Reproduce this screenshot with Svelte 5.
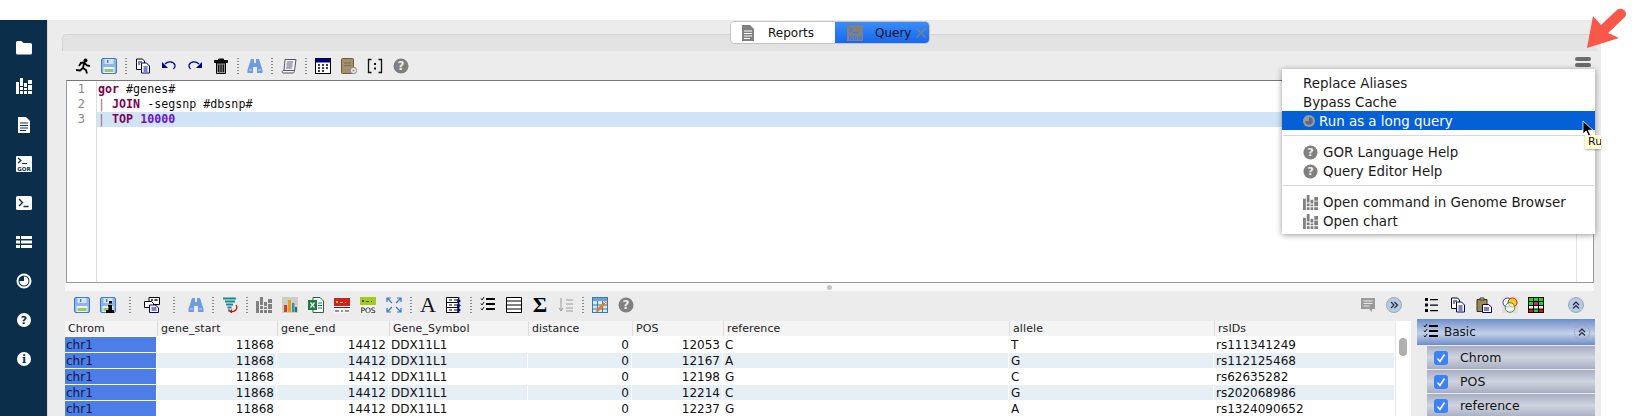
<script>
  // svg bodies, all drawn on a 16x16 box
  const help = '<circle cx="8" cy="8" r="7.500" fill="#808080"/><text x="8" y="12" text-anchor="middle" font-size="12" font-weight="700" font-family="DejaVu Sans" fill="#ececec">?</text>';
  const save = '<rect x=".5" y=".5" width="15" height="15" rx="1.500" fill="#8fb4e6" stroke="#3f78c8"/><rect x="3.500" y="1" width="9" height="5" fill="#d5e3f6"/><rect x="6" y="2" width="1.400" height="3" fill="#3f78c8"/><rect x="2.500" y="9" width="11" height="6" fill="#eef3f8"/><rect x="3.500" y="11" width="9" height="3" fill="#98c860"/>';
  const bars = '<path d="M0 4h3v12H0zM4 0h3v8H4zM4 9h3v3H4zM4 13h3v3H4zM8 5h3v4H8zM8 10h3v2H8zM8 13h3v3H8zM12 2h4v4h-4zM12 7h4v5h-4zM12 13h4v3h-4z"/>';
  const copy = '<path d="M1.500 1h6l2 2v8.500h-8z" fill="#fff" stroke="#000"/><path d="M6.500 5h5l3 3v7h-8z" fill="#fff" stroke="#00007a"/><path d="M3 4h4M3 6h2M8.500 9h4M8.500 11h4M8.500 13h4" stroke="#00007a" fill="none"/>';
  const binoc = '<path d="M4 1h3v4h2V1h3l3.500 11v3H10V9H6v6H.5v-3z" fill="#6f9be0"/><path d="M2 12h3M11 12h3" stroke="#c8daf4"/>';
  const chevR = '<circle cx="8" cy="8" r="7.500" fill="#b4cbe6" stroke="#a0a8b4"/><path d="M5 5l3 3-3 3M8.500 5l3 3-3 3" fill="none" stroke="#223" stroke-width="1.100"/>';
  const chevU = '<circle cx="8" cy="8" r="7.500" fill="#b4cbe6" stroke="#a0a8b4"/><path d="M5 8l3-3 3 3M5 11.500l3-3 3 3" fill="none" stroke="#223" stroke-width="1.100"/>';
  const checks = '<path d="M1 1.500l1 1.500 2-3M1 6.500l1 1.500 2-3M1 11.500l1 1.500 2-3" fill="none" stroke="#000" stroke-width=".9"/><path d="M6 2h9M6 7h9M6 12h9" stroke="#000" stroke-width="1.800"/>';

  const icons = {
    folder: '<path d="M0 3.500q0-1.500 1.500-1.500h4l2 2h7q1.500 0 1.500 1.500v8.500q0 1.500-1.500 1.500h-13q-1.500 0-1.500-1.500z" fill="#fff"/>',
    sidedoc: '<path d="M2 0h8l4 4v12H2z" fill="#fff"/><path d="M4 6h8M4 8.500h8M4 11h8M4 13.500h6" stroke="#0b2e4b" stroke-width="1.200"/>',
    gor: '<rect width="16" height="16" rx="1" fill="#fff"/><path d="M2 2l3 2.500-3 2.500M6 7.500h5" fill="none" stroke="#0b2e4b" stroke-width="1.200"/><text x="8" y="14.500" text-anchor="middle" font-size="5.500" font-weight="700" font-family="DejaVu Sans" fill="#0b2e4b">GOR</text>',
    term: '<rect y="1" width="16" height="14" rx="1.500" fill="#fff"/><path d="M3 4l3.500 3.500L3 11M7.500 11.500h5" fill="none" stroke="#0b2e4b" stroke-width="1.400"/>',
    list: '<path d="M0 2h4v3H0zM5 2h11v3H5zM0 6.500h4v3H0zM5 6.500h11v3H5zM0 11h4v3H0zM5 11h11v3H5z" fill="#fff"/>',
    clock: '<circle cx="8" cy="8" r="6.500" fill="none" stroke="#fff" stroke-width="2"/><path d="M8 3.500a4.500 4.500 0 1 1-4.500 4.500H8z" fill="#fff"/>',
    sidehelp: '<circle cx="8" cy="8" r="7" fill="#fff"/><text x="8" y="12" text-anchor="middle" font-size="11" font-weight="700" font-family="DejaVu Sans" fill="#0b2e4b">?</text>',
    info: '<circle cx="8" cy="8" r="7" fill="#fff"/><text x="8" y="12" text-anchor="middle" font-size="11" font-weight="700" font-family="DejaVu Serif" fill="#0b2e4b">i</text>',
    bars,
    sidebars: bars.replace('<path', '<path fill="#fff"'),
    graybars: bars.replace('<path', '<path fill="#808080"'),
    run: '<circle cx="10.500" cy="2.500" r="2"/><path d="M5 5l4-.500 3 3 3 .500M9 5L8 10l-3 2.500L1 12M8 10l3 2 1 3.500M6 5L4 8" fill="none" stroke="#000" stroke-width="1.800"/>',
    save,
    copy,
    undo: '<path d="M4 6c3-3 8-3 10 1 .500 2-.500 3-1.500 4" fill="none" stroke="#00008c" stroke-width="1.300"/><path d="M1 4v6h6z" fill="#00008c"/>',
    redo: '<path d="M12 6C9 3 4 3 2 7c-.500 2 .500 3 1.500 4" fill="none" stroke="#00008c" stroke-width="1.300"/><path d="M15 4v6H9z" fill="#00008c"/>',
    trash: '<path d="M1.500 2.500h13v2h-13zM5.500 2.500v-1.500h5v1.500" fill="#111" stroke="#000"/><path d="M3.500 5h9v10.500h-9z" fill="#999" stroke="#000"/><path d="M5.700 6.500v7.500M8 6.500v7.500M10.300 6.500v7.500" stroke="#000" stroke-width="1.200"/>',
    binoc,
    script: '<path d="M4 1.500h11l-1.500 11H3zM3 12.500c-2 0-2.500 2-1 2.500h10c1 0 1.500-1.500 1.500-2.500" fill="#f4f4f4" stroke="#556"/><path d="M6 4h6M5.500 6h6M5.500 8h6M5 10h6" stroke="#667"/>',
    calendar: '<rect x=".5" y=".5" width="15" height="15" fill="#fff" stroke="#000"/><rect x="1" y="1" width="14" height="3.500" fill="#00008c"/><path d="M3 7h2M7 7h2M11 7h2M3 10h2M7 10h2M11 10h2M3 13h2M7 13h2" stroke="#000" stroke-width="1.300"/>',
    book: '<rect x=".5" y=".5" width="12" height="15" rx="1" fill="#a48f6d" stroke="#6e5c40"/><path d="M3 5h7M3 7.500h7" stroke="#7d6b4c"/><circle cx="12.500" cy="12.500" r="3.200" fill="#e8e8e8" stroke="#888"/><circle cx="12.500" cy="12.500" r="1" fill="#888"/>',
    brackets: '<path d="M4.500 1.500h-3v13h3M11.500 1.500h3v13h-3" fill="none" stroke="#111" stroke-width="1.300"/><path d="M7 5h2v2H7zM7 9.500h2v2H7z" fill="#111"/>',
    help,
    saveinfo: save + '<rect x="9" y="4" width="3" height="2.500" fill="#000"/><path d="M8 8h4v5h2v3H6v-3h2.500V9.500H8z" fill="#000"/>',
    tablecopy: '<path d="M5 .5h10.500v7H5z" fill="#fff" stroke="#000"/><path d="M7 3h2M10.500 3h3" stroke="#000" stroke-width="1.500"/><path d="M.5 4.500h7l2 2v4H.5z" fill="#fff" stroke="#000"/><path d="M5.500 8h6l3 3v4.500h-9z" fill="#fff" stroke="#00007a"/><path d="M7.500 11h5M7.500 13h5" stroke="#00007a"/>',
    filter: '<path d="M1 1.500h13M3 4.500h10M4 7.500h7M5.500 10.500h4M6 13.500h2" stroke="#1c8a8a" stroke-width="1.800"/><path d="M14 8c2 3 0 7-5 6.500" fill="none" stroke="#d01010" stroke-width="1.300"/><path d="M7 14.500l3-2.500v4.500z" fill="#d01010"/>',
    graybar: '<rect width="16" height="16" fill="#d0ccc8"/><path d="M2 8h3v7H2z" fill="#d04020"/><path d="M6 3h3v12H6z" fill="#e0a020"/><path d="M10 6h2.500v9H10z" fill="#3090c8"/><path d="M13 10h2v5h-2z" fill="#208040"/>',
    excel: '<path d="M5 .5h7l3.500 3.500v11.500H5z" fill="#fff" stroke="#1d6b3c"/><rect y="3" width="9" height="10" fill="#1d7a44"/><path d="M2.500 5.500l4 5M6.500 5.500l-4 5" stroke="#fff" stroke-width="1.300"/><path d="M10 6h4M10 8.500h4M10 11h4" stroke="#1d7a44"/>',
    redtrack: '<rect width="16" height="16" fill="#f4f4f4"/><rect y="1" width="16" height="8" fill="#d02020"/><path d="M2 6V4h2v2zM6 6V5h3v1zM11 6V5h1v1z" fill="#a0e040"/><path d="M0 10.500h16M1 14h4M7 14h2M11 14h4" stroke="#333"/>',
    pos: '<rect width="16" height="16" fill="#f4f4f4"/><rect y="0" width="16" height="8" fill="#a8c820"/><path d="M2 5V3h2v2zM6 5V4h3v1zM11 5V4h1v1z" fill="#2a6010"/><text x="8" y="15.500" text-anchor="middle" font-size="7.500" font-family="DejaVu Sans" fill="#000">POS</text>',
    expand: '<path d="M6 6L1.500 1.500M1 5V1h4M10 6l4.500-4.500M11 1h4v4M6 10l-4.500 4.500M1 11v4h4M10 10l4.500 4.500M15 11v4h-4" fill="none" stroke="#3c78d0" stroke-width="1.200"/>',
    cols: '<path d="M.5.5h12v15H.5z" fill="#fff" stroke="#000"/><path d="M.5 5.500h12M.5 10.500h12" stroke="#000"/><path d="M3 3h3M8 3h3M3 8h3M8 8h3M3 13h3M8 13h3" stroke="#000"/><path d="M13 0v16M11.500 2.500l3 1.500-3 1.500zM11.500 7l3 1.500-3 1.500zM11.500 11.500l3 1.500-3 1.500z" fill="#00008c" stroke="#00008c" stroke-width=".8"/>',
    checks,
    lines: '<path d="M.5.5h15v15H.5z" fill="#fff" stroke="#000"/><path d="M0 4h16M0 8h16M0 12h16" stroke="#000" stroke-width="1.200"/>',
    sort: '<path d="M3 1v13M1 11l2 3 2-3M8 3h7M8 7h7M8 11h7M8 14h7" fill="none" stroke="#9a9a9a"/>',
    tableedit: '<rect x=".5" y=".5" width="15" height="15" fill="#d8e8f6" stroke="#3c78b0"/><rect x="1" y="1" width="14" height="3" fill="#6fa0d0"/><path d="M1 8h14M1 12h14M5.500 4v11M10.500 4v11" stroke="#3c78b0"/><path d="M5 12l8-8 2 2-8 8-3 1z" fill="#e88020"/><path d="M12 5l2 2" stroke="#fff"/>',
    comment: '<path d="M1 1h14v11h-3v3l-3-3H1z" fill="#9a9a9a"/><path d="M3.500 4h9M3.500 6.500h9M3.500 9h6" stroke="#ececec"/>',
    chevR,
    chevU,
    plainlist: '<path d="M1 1h3v3H1zM1 6.500h3v3H1zM1 12h3v3H1zM6 2h8v1.300H6zM6 7.500h8v1.300H6zM6 13h8v1.300H6z"/>',
    clip: '<path d="M1 2.500h10v12H1z" fill="#9a8a50" stroke="#332"/><path d="M4 3V1h4v2z" fill="#ddd" stroke="#332"/><path d="M6.500 7.500h6l3 2.500v5.500h-9z" fill="#fff" stroke="#00007a"/><path d="M8 11h5M8 13h5" stroke="#00007a"/>',
    venn: '<rect width="16" height="16" fill="#f4d8dc"/><circle cx="5.500" cy="5.500" r="4.500" fill="#fff" stroke="#2040d0"/><circle cx="10.500" cy="5.500" r="4.500" fill="#f0d020" stroke="#d02020"/><circle cx="8" cy="10.500" r="4.800" fill="#fff" fill-opacity=".6" stroke="#20a040"/>',
    grid: '<rect width="16" height="16" fill="#000"/><path d="M1 1h4v3H1zM6 1h4v3H6zM11 1h4v3h-4zM1 5h4v3H1zM11 5h4v3h-4z" fill="#10e010"/><path d="M6 5h4v3H6z" fill="#e010d0"/><path d="M1 9h4v2.500H1zM6 9h4v2.500H6zM11 9h4v2.500h-4z" fill="#fff"/><path d="M1 12.500h4V15H1zM11 12.500h4V15h-4z" fill="#e01010"/><path d="M6 12.500h4V15H6z" fill="#10e010"/>'
  };

  const sideIcons = ['folder', 'sidebars', 'sidedoc', 'gor', 'term', 'list', 'clock', 'sidehelp', 'info'];

  const editorTools = ['run', 'save', '|', 'copy', 'undo', 'redo', 'trash', '|', 'binoc', '|', 'script', '|', 'calendar', 'book', 'brackets', 'help'];
  const tableTools = ['save', 'saveinfo', '||', 'tablecopy', '||', 'binoc', '|', 'filter', '|', 'graybars', 'graybar', 'excel', 'redtrack', 'pos', 'expand', '|', 'A', 'cols', '|', 'checks', 'lines', 'Σ', 'sort', '|', 'tableedit', 'help'];
  const sideTools = ['plainlist', 'copy', 'clip', 'venn', 'grid'];

  const columns = ['Chrom', 'gene_start', 'gene_end', 'Gene_Symbol', 'distance', 'POS', 'reference', 'allele', 'rsIDs'];
  const rows = [
    [12053, 'C', 'T', 'rs111341249'],
    [12167, 'A', 'G', 'rs112125468'],
    [12198, 'G', 'C', 'rs62635282'],
    [12214, 'C', 'G', 'rs202068986'],
    [12237, 'G', 'A', 'rs1324090652']
  ];
  const fields = ['Chrom', 'POS', 'reference'];
</script>

{#snippet icon(name, size = 16)}
  <svg class="icon" width={size} height={size} viewBox="0 0 16 16">{@html icons[name]}</svg>
{/snippet}

{#snippet tools(list)}
  {#each list as t}
    {#if t === '|'}
      <span class="sep"></span>
    {:else if t === '||'}
      <span class="sep wide"></span>
    {:else if t === 'A' || t === 'Σ'}
      <span class="tool glyph" class:sum={t === 'Σ'}>{t}</span>
    {:else}
      <span class="tool">{@render icon(t)}</span>
    {/if}
  {/each}
{/snippet}

<div class="app">
  <nav class="sidebar">
    {#each sideIcons as s}
      <span class="side-item">{@render icon(s)}</span>
    {/each}
  </nav>

  <main class="main">
    <section class="panel">
      <div class="strip">
        <div class="tabs">
          <div class="tab">
            <svg class="tab-icon" width="12" height="16" viewBox="0 0 12 16"><path d="M0 0h8l4 4v12H0z" fill="#808080"/><path d="M2 6h8M2 8.500h8M2 11h8M2 13.500h6" stroke="#fff"/></svg>
            Reports
          </div>
          <div class="tab active">
            <svg class="tab-icon" width="16" height="16" viewBox="0 0 16 16"><rect width="16" height="16" fill="#808080"/><path d="M2 2l3 2.500L2 7M6 7.500h5" fill="none" stroke="#2f7ef5"/><text x="8" y="14.500" text-anchor="middle" font-size="5.500" font-weight="700" font-family="DejaVu Sans" fill="#2f7ef5">GOR</text></svg>
            Query
            <svg class="tab-close" width="10" height="10" viewBox="0 0 10 10"><path d="M.5.5l9 9M9.500.5l-9 9" stroke="#808080" stroke-width="1.300"/></svg>
          </div>
        </div>
      </div>

      <div class="toolbar top">
        {@render tools(editorTools)}
        <span class="burger"></span>
      </div>

      <div class="editor">
        <div class="gutter">
          <div>1</div>
          <div>2</div>
          <div>3</div>
        </div>
        <div class="code">
          <div class="line"><b>gor</b> #genes#</div>
          <div class="line"><i>|</i> <b>JOIN</b> -segsnp #dbsnp#</div>
          <div class="line current"><i>|</i> <b>TOP</b> <em>10000</em></div>
        </div>
        <div class="track"></div>
      </div>

      <div class="sash"><span></span></div>

      <div class="lower">
        <div class="results">
          <div class="toolbar table-tools">
            {@render tools(tableTools)}
            <span class="spacer"></span>
            <span class="tool">{@render icon('comment')}</span>
            <span class="tool last">{@render icon('chevR')}</span>
          </div>
          <div class="table-wrap">
            <div class="table">
              <div class="row head">
                {#each columns as c}
                  <div class="cell">{c}</div>
                {/each}
              </div>
              {#each rows as r}
                <div class="row">
                  <div class="cell chrom">chr1</div>
                  <div class="cell num">11868</div>
                  <div class="cell num">14412</div>
                  <div class="cell">DDX11L1</div>
                  <div class="cell num">0</div>
                  <div class="cell num">{r[0]}</div>
                  <div class="cell">{r[1]}</div>
                  <div class="cell">{r[2]}</div>
                  <div class="cell">{r[3]}</div>
                </div>
              {/each}
            </div>
            <div class="scroll"><span></span></div>
          </div>
        </div>

        <aside class="fields">
          <div class="toolbar side">
            {@render tools(sideTools)}
            <span class="spacer"></span>
            <span class="tool">{@render icon('chevU')}</span>
          </div>
          <div class="group">
            {@render icon('checks')}
            <span>Basic</span>
            <svg class="group-toggle" width="16" height="16" viewBox="0 0 16 16"><circle cx="8" cy="8" r="7.500" fill="none" stroke="#9aa0ac" stroke-dasharray="1.500 1"/><path d="M5 8l3-3 3 3M5 11.500l3-3 3 3" fill="none" stroke="#223" stroke-width="1.100"/></svg>
          </div>
          {#each fields as f}
            <div class="field">
              <span class="check"><svg width="14" height="14" viewBox="0 0 14 14"><path d="M3.500 7.500l2.500 3 4.500-7" fill="none" stroke="#fff" stroke-width="1.600"/></svg></span>
              {f}
            </div>
          {/each}
        </aside>
      </div>
    </section>
  </main>

  <!-- popup menu, cursor and the annotation arrow lie over the page -->
  <div class="menu">
    <div class="item">Replace Aliases</div>
    <div class="item">Bypass Cache</div>
    <div class="item selected">
      <svg width="12" height="12" viewBox="0 0 16 16"><circle cx="8" cy="8" r="8" fill="#9a9a9a"/><path d="M8 3a5 5 0 1 1-5 5h5z" fill="#5a6a88"/></svg>
      Run as a long query
    </div>
    <hr />
    <div class="item iconed">{@render icon('help', 15)} GOR Language Help</div>
    <div class="item iconed">{@render icon('help', 15)} Query Editor Help</div>
    <hr />
    <div class="item iconed">{@render icon('graybars', 15)} Open command in Genome Browser</div>
    <div class="item iconed">{@render icon('graybars', 15)} Open chart</div>
  </div>

  <div class="tooltip">Ru</div>

  <svg class="cursor" width="13" height="18" viewBox="0 0 13 18"><path d="M1 1v13l3.200-3 2.300 5 2-1-2.200-4.800H11z" fill="#000" stroke="#fff" stroke-width=".8"/></svg>

  <svg class="arrow" width="48" height="52" viewBox="0 0 48 52"><path d="M3 48L9 16l8 9 16-15c4-3 9 0 9 4 0 2-1 3-2 4L24 33l11 5z" fill="#f8574a"/></svg>
</div>

<style>
  :global(body) {
    margin: 0;
    background: #fff;
  }

  .app {
    position: relative;
    display: flex;
    width: 1632px;
    height: 416px;
    padding-top: 20px;
    box-sizing: border-box;
    overflow: hidden;
    font-family: "DejaVu Sans", sans-serif;
    color: #111;
  }

  .icon {
    display: block;
    flex: none;
  }

  .sidebar {
    width: 47px;
    flex: none;
    background: #0b2e4b;
    padding-top: 7px;
    box-sizing: border-box;
  }

  .side-item {
    display: flex;
    height: 39.1px;
    align-items: center;
    justify-content: center;
  }

  .main {
    width: 1554px;
    flex: none;
    box-sizing: border-box;
    background: #ececec;
    border-left: 1px solid #d6d6d6;
    padding: 14px 4px 0 14px;
  }

  .panel {
    height: 382px;
  }

  .strip {
    height: 16px;
    display: flex;
    justify-content: center;
    background: #e3e3e3;
    border-top: 1px solid #d6d6d6;
    border-left: 1px solid #d6d6d6;
    border-top-left-radius: 5px;
  }

  .tabs {
    display: flex;
    height: 21px;
    margin-top: -13px;
    font-size: 12px;
    border-radius: 4px;
    box-shadow: 0 0 0 1px #c4c4c4;
    overflow: hidden;
  }

  .tab {
    display: flex;
    align-items: center;
    width: 104px;
    box-sizing: border-box;
    background: #fff;
    padding-left: 11px;
    gap: 14px;
  }

  .tab.active {
    width: 94px;
    background: linear-gradient(#3b8cf8, #1668f0);
    padding-left: 12px;
    gap: 12px;
  }

  .tab-close {
    margin-left: -7px;
  }

  .toolbar {
    display: flex;
    align-items: center;
    height: 30px;
    padding-left: 8px;
    box-sizing: border-box;
  }

  .toolbar.top {
    height: 29px;
    position: relative;
  }

  .toolbar.table-tools {
    padding-left: 4px;
    padding-bottom: 2px;
  }

  .tool {
    width: 26px;
    display: flex;
    justify-content: center;
    flex: none;
  }

  .tool.last {
    margin-right: 4px;
  }

  .glyph {
    font-family: "Liberation Serif", serif;
    font-size: 22px;
    line-height: 16px;
    color: #111;
  }

  .glyph.sum {
    font-weight: 700;
    color: #000;
  }

  .sep {
    width: 8px;
    height: 18px;
    flex: none;
    box-sizing: border-box;
    background: radial-gradient(circle, #888 0.7px, transparent 1px) center top / 2px 3px repeat-y;
  }

  .sep.wide {
    width: 18px;
  }

  .spacer {
    flex: 1;
  }

  .burger {
    position: absolute;
    left: 1513px;
    top: 6px;
    width: 16px;
    height: 4px;
    border-radius: 2px;
    background: #6c6c6c;
    box-shadow: 0 6px 0 #6c6c6c;
  }

  .editor {
    display: flex;
    height: 203px;
    margin: 0 3px 0 4px;
    box-sizing: border-box;
    background: #fff;
    border: 1px solid #999;
    border-top-color: #777;
    font-family: "DejaVu Sans Mono", monospace;
    font-size: 11.67px;
    line-height: 15px;
  }

  .gutter {
    width: 30px;
    flex: none;
    box-sizing: border-box;
    padding: 1px 11px 0 0;
    text-align: right;
    color: #888;
    border-right: 1px solid #ddd;
    font-size: 12px;
  }

  .code {
    flex: 1;
    padding-top: 1px;
  }

  .line {
    padding-left: 1px;
    height: 15px;
    white-space: pre;
  }

  .line b {
    font-weight: 700;
    color: #7f0055;
  }

  .line i {
    font-style: normal;
    color: #a06a6a;
  }

  .line em {
    font-style: normal;
    font-weight: 700;
    color: #6a10d0;
  }

  .current {
    background: #d0e4f6;
  }

  .track {
    width: 16px;
    flex: none;
    border-left: 1px solid #e4e4e4;
  }

  .sash {
    height: 8px;
    margin-right: 3px;
    margin-left: 3px;
    background: #f8f8f8;
    display: flex;
    justify-content: center;
    align-items: center;
  }

  .sash span {
    width: 5px;
    height: 5px;
    border-radius: 50%;
    background: #c4c4c4;
  }

  .lower {
    display: flex;
    gap: 6px;
    margin-left: 3px;
  }

  .results {
    width: 1346px;
    flex: none;
  }

  .table-wrap {
    display: flex;
    background: #fff;
    height: 95px;
    overflow: hidden;
  }

  .table {
    width: 1330px;
    flex: none;
  }

  .row {
    display: grid;
    grid-template-columns: 92px 120px 112px 139px 104px 91px 286px 205px 181px;
    height: 15px;
    margin-bottom: 1px;
    font-size: 12px;
    line-height: 16px;
  }

  .row:nth-child(odd) {
    background: #e6eef6;
  }

  .cell {
    padding: 0 2px;
    border-right: 1px solid #fff;
    white-space: nowrap;
    overflow: hidden;
  }

  .cell.num {
    text-align: right;
  }

  .cell.chrom {
    background: #4d7ee8;
    color: #0a1a3c;
    padding-left: 1px;
  }

  .row.head {
    background: #f4f4f4;
    font-size: 11px;
    line-height: 15px;
    margin-bottom: 1px;
    letter-spacing: 0.1px;
  }

  .row.head .cell {
    padding-left: 3px;
    border-right: 0;
    border-left: 1px solid #ddd;
    color: #222;
  }

  .row.head .cell:first-child {
    border-left: 0;
  }

  .scroll {
    flex: 1;
    position: relative;
    border-left: 1px solid #e8e8e8;
  }

  .scroll span {
    position: absolute;
    left: 3px;
    top: 17px;
    width: 8px;
    height: 18px;
    border-radius: 4px;
    background: #b0b0b0;
  }

  .fields {
    width: 178px;
    flex: none;
  }

  .toolbar.side {
    height: 28px;
    padding-left: 2px;
    padding-right: 6px;
  }

  .group {
    display: flex;
    align-items: center;
    height: 26px;
    padding-left: 6px;
    gap: 5px;
    font-size: 12px;
    background: linear-gradient(#6d8ecb, #c4d0e6 55%, #6d8ecb);
    margin-bottom: 1px;
  }

  .group-toggle {
    margin-left: auto;
    margin-right: 5px;
  }

  .field {
    display: flex;
    align-items: center;
    height: 23px;
    margin: 0 0 1px 10px;
    padding-left: 7px;
    gap: 12px;
    font-size: 12.5px;
    background: linear-gradient(#a8aec2, #d0d4e0 50%, #a8aec2);
  }

  .check {
    width: 14px;
    height: 14px;
    border-radius: 3px;
    background: #3b82f6;
    flex: none;
  }

  .check svg {
    display: block;
  }

  .menu {
    position: absolute;
    left: 1282px;
    top: 69px;
    width: 313px;
    height: 165px;
    box-sizing: border-box;
    padding-top: 4px;
    background: #fff;
    box-shadow: 0 1px 6px rgba(0, 0, 0, 0.4);
    font-size: 13.4px;
    color: #1a1a1a;
  }

  .item {
    display: flex;
    align-items: center;
    height: 19px;
    padding: 1px 0 0 21px;
    box-sizing: border-box;
    white-space: nowrap;
  }

  .item.iconed {
    gap: 5px;
  }

  .item.selected {
    background: #0560d8;
    color: #fff;
    gap: 4px;
  }

  .menu hr {
    height: 1px;
    margin: 5px 1px 6px;
    border: 0;
    background: #d8d8d8;
  }

  .tooltip {
    position: absolute;
    left: 1585px;
    top: 135px;
    width: 16px;
    height: 14px;
    overflow: hidden;
    padding-left: 3px;
    box-sizing: border-box;
    background: #ffffd0;
    font-size: 11px;
    line-height: 14px;
    box-shadow: 0 1px 2px rgba(0, 0, 0, 0.3);
  }

  .cursor {
    position: absolute;
    left: 1582px;
    top: 120px;
  }

  .arrow {
    position: absolute;
    left: 1584px;
    top: 0;
  }
</style>
